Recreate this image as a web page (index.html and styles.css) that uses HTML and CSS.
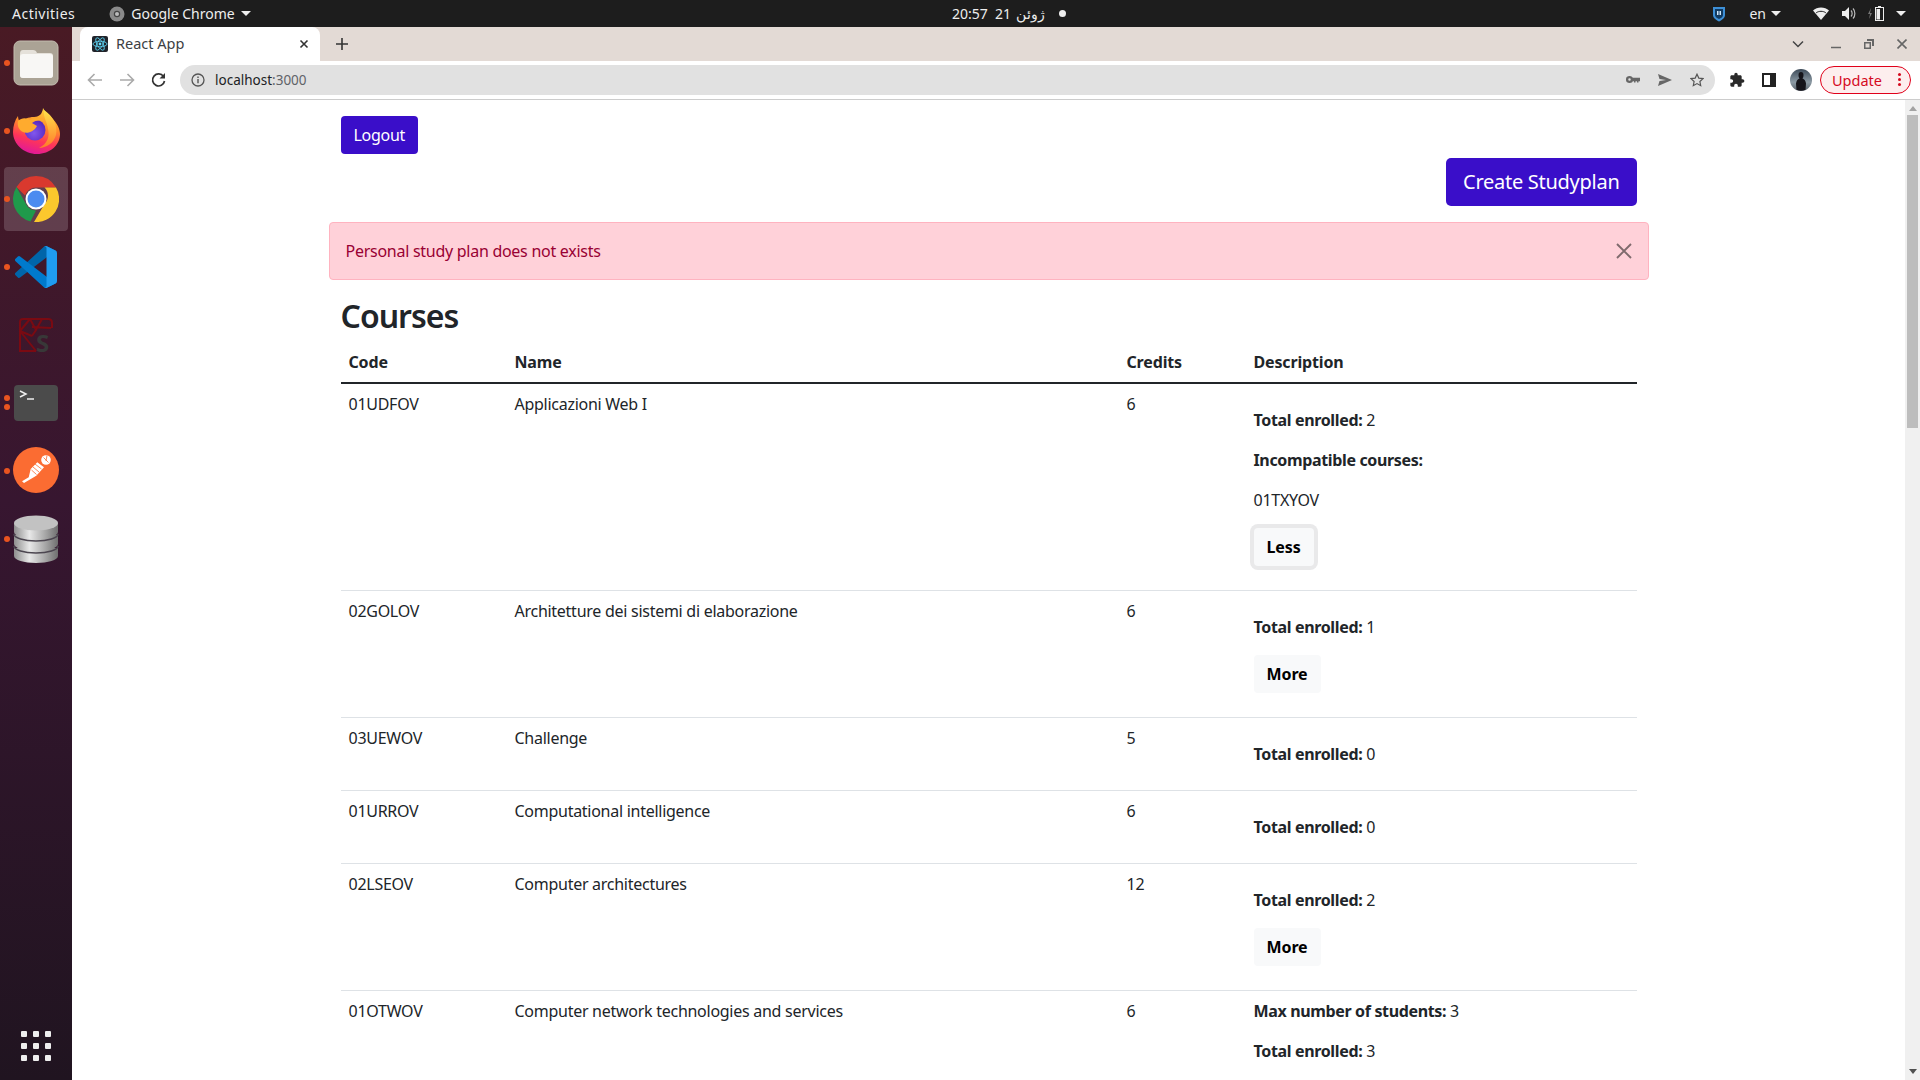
FILE: index.html

```html
<!DOCTYPE html>
<html lang="en">
<head>
    <meta charset="UTF-8">
    <title>React App</title>
    <link rel="stylesheet" href="styles.css">
</head>
<body>
    <header class="topbar">
        <div class="topbar-left">
            <span class="activities">Activities</span>
            <span class="app-menu">
                <svg class="app-icon" width="16" height="16" viewBox="0 0 16 16"><circle cx="8" cy="8" r="7.500" fill="#8a8a8a"/><circle cx="8" cy="8" r="3.200" fill="#444"/><circle cx="8" cy="8" r="2" fill="#bbb"/></svg>
                Google Chrome
                <i class="caret"></i>
            </span>
        </div>
        <div class="clock">20:57 &nbsp;21 <span dir="rtl">ژوئن</span> <i class="clock-dot"></i></div>
        <div class="tray">
            <svg class="tray-shield" width="14" height="16" viewBox="0 0 14 16"><path d="M1 1h12v8c0 3-3 5-6 6.500C4 14 1 12 1 9z" fill="#3d8fd6"/><path d="M3 3h8v6c0 2-2 3-4 4-2-1-4-2-4-4z" fill="#123a60"/><path d="M5 5h1.500v4H5zM7.500 5H9v4H7.500z" fill="#cfe6fa"/></svg>
            <span class="lang">en <i class="caret"></i></span>
            <svg width="16" height="13" viewBox="0 0 16 13"><path d="M0 3.500C4-.5 12-.5 16 3.500L8 13z" fill="#eee"/><path d="M3.200 5.800c2.600-2 7-2 9.600 0" stroke="#1d1d1d" stroke-width="1" fill="none"/></svg>
            <svg width="15" height="13" viewBox="0 0 15 13"><path d="M0 4h3l4-4v13l-4-4H0z" fill="#eee"/><path d="M9 3.500c1.500 1.500 1.500 4.500 0 6M11 1.500c2.500 2.500 2.500 7.500 0 10" stroke="#bbb" stroke-width="1.200" fill="none"/></svg>
            <svg class="battery" width="16" height="15" viewBox="0 0 16 15"><path d="M3 2 0 8h2l-1 5 3-6H2z" fill="#777"/><rect x="7.500" y="1.500" width="8" height="13" fill="none" stroke="#eee"/><rect x="10" y="0" width="3" height="2" fill="#eee"/><rect x="8.500" y="3" width="3.500" height="10.500" fill="#eee"/></svg>
            <i class="caret"></i>
        </div>
    </header>

    <div class="desktop">
        <nav class="dock">
            <div class="dock-item running">
                <svg width="46" height="46" viewBox="0 0 46 46">
                    <rect x="1" y="1" width="44" height="44" rx="6" fill="#aba395" stroke="#c4bdb0"/>
                    <path d="M7 14q0-4 3-4h10q3 0 4 3h13q3 0 3 3v19q0 3-3 3H10q-3 0-3-3z" fill="#e5e1da"/>
                    <path d="M7 17q0-3 3-3h27q3 0 3 3v18q0 3-3 3H10q-3 0-3-3z" fill="#f8f7f5"/>
                </svg>
            </div>
            <div class="dock-item running">
                <svg class="firefox" width="47" height="47" viewBox="0 0 47 47">
                    <defs>
                        <linearGradient id="ff1" x1="0.700" y1="0" x2="0.400" y2="1"><stop offset="0" stop-color="#ffd83c"/><stop offset="0.400" stop-color="#ff8a2a"/><stop offset="0.700" stop-color="#ff3558"/><stop offset="1" stop-color="#e0189a"/></linearGradient>
                        <linearGradient id="ff3" x1="0.500" y1="0" x2="0.500" y2="1"><stop offset="0" stop-color="#ffe24a"/><stop offset="1" stop-color="#ff7a2a"/></linearGradient>
                        <radialGradient id="ff2" cx="0.450" cy="0.650" r="0.600"><stop offset="0" stop-color="#8056ee"/><stop offset="1" stop-color="#5a2bc0"/></radialGradient>
                    </defs>
                    <path d="M30 1C32 5 35 7 39 11 44 16 47 22 47 27 47 38 37 47 24 47 11 47 0 37 0 25 0 19 2 13 5 9 5 12 6 14 8 16 11 12 15 10 21 10 24 10 26 9 28 7 29 5 30 3 30 1Z" fill="url(#ff1)"/>
                    <circle cx="22" cy="23" r="10.500" fill="url(#ff2)"/>
                    <path d="M31 3C40 9 45 18 43 28 41 36 33 41 26 41 34 37 37 30 35 22 34 15 30 10 31 3Z" fill="url(#ff3)"/>
                    <path d="M5 14C9 10 14 11 17 13 21 10 28 10 32 14 27 13 22 13 19 16L24 19C21 25 14 27 10 25 6 23 4 19 5 14Z" fill="#ffab2e"/>
                </svg>
            </div>
            <div class="dock-item running active">
                <svg width="46" height="46" viewBox="0 0 46 46">
                    <path d="M23 0a23 23 0 0 1 20 11.500H23a11.500 11.500 0 0 0-11 8L3.500 11A23 23 0 0 1 23 0z" fill="#d9392e"/>
                    <path d="M3.500 11 13 28a11.500 11.500 0 0 0 10 6.500L17.500 45.500A23 23 0 0 1 3.500 11z" fill="#1f9a4b"/>
                    <path d="M43 11.500A23 23 0 0 1 21 46l10.500-18a11.500 11.500 0 0 0 0-16.500z" fill="#fbc82d"/>
                    <circle cx="23" cy="23" r="10.500" fill="#fff"/>
                    <circle cx="23" cy="23" r="8.500" fill="#4c8bf0"/>
                </svg>
            </div>
            <div class="dock-item running">
                <svg width="42" height="42" viewBox="0 0 100 100">
                    <path d="M96.460 10.800 75.860.870a6.230 6.230 0 0 0-7.110 1.210L1.300 63.580a4.170 4.170 0 0 0 0 6.160l5.510 5.010a4.170 4.170 0 0 0 5.320.240L93.360 13.370c2.730-2.070 6.640-.130 6.640 3.300v-.240a6.250 6.250 0 0 0-3.540-5.630z" fill="#0065a9"/>
                    <path d="M96.460 89.200 75.860 99.130a6.230 6.230 0 0 1-7.110-1.210L1.300 36.420a4.170 4.170 0 0 1 0-6.160l5.510-5.010a4.170 4.170 0 0 1 5.320-.240L93.360 86.630c2.730 2.070 6.640.130 6.640-3.300v.240a6.250 6.250 0 0 1-3.540 5.630z" fill="#007acc"/>
                    <path d="M75.860 99.130a6.230 6.230 0 0 1-7.120-1.200c2.310 2.300 6.260.670 6.260-2.600V4.670c0-3.270-3.950-4.900-6.260-2.600a6.230 6.230 0 0 1 7.120-1.200l20.600 9.900A6.250 6.250 0 0 1 100 16.400v67.200c0 2.400-1.380 4.600-3.540 5.630z" fill="#1f9cf0"/>
                </svg>
            </div>
            <div class="dock-item">
                <svg class="kile" width="36" height="44" viewBox="0 0 36 44">
                    <path d="M18 34H2V5Q2 2 5 2H30Q34 2 34 6V11M2 14 12 2M2 14 18 34M2 14 14 19M12 2 18 13 24 2M14 10 33 11M18 13 14 19" fill="none" stroke="#7a0a12" stroke-width="2"/>
                    <text x="18" y="35" class="kile-letter">S</text>
                </svg>
            </div>
            <div class="dock-item running double">
                <svg width="44" height="36" viewBox="0 0 44 36">
                    <rect width="44" height="36" rx="4" fill="#4b4b4b"/>
                    <path d="M6 6l6 3-6 3" fill="none" stroke="#eee" stroke-width="1.500"/>
                    <path d="M13 14h7" stroke="#eee" stroke-width="1.500"/>
                </svg>
            </div>
            <div class="dock-item running">
                <svg class="postman" width="46" height="46" viewBox="0 0 46 46">
                    <circle cx="23" cy="23" r="23" fill="#fb6c32"/>
                    <path d="M24.300 15.300 31 20.300 23.300 28.700 11 36 9 34.300 15.700 30.300 17.700 22Z" fill="#fff"/>
                    <circle cx="33" cy="13" r="4.800" fill="#fff"/>
                    <path d="M22 17 28.500 22M20 20 26 25M18.500 23 23.500 27.500" stroke="#fb6c32" stroke-width="0.800"/>
                    <path d="M30.500 10.500 35.500 15.500M34 8.500 33 14" stroke="#fb6c32" stroke-width="0.800" fill="none"/>
                </svg>
            </div>
            <div class="dock-item running">
                <svg width="46" height="48" viewBox="0 0 46 48">
                    <defs>
                        <linearGradient id="db1" x1="0" x2="1" y1="0" y2="0"><stop offset="0" stop-color="#8e8e8e"/><stop offset="0.350" stop-color="#e8e8e8"/><stop offset="0.700" stop-color="#a9a9a9"/><stop offset="1" stop-color="#6f6f6f"/></linearGradient>
                    </defs>
                    <path d="M1 33v8c0 4 10 7 22 7s22-3 22-7v-8z" fill="url(#db1)"/>
                    <path d="M1 31c0 4 10 7 22 7s22-3 22-7" fill="none" stroke="#4c4650" stroke-width="1.500"/>
                    <path d="M1 20v9c0 4 10 7 22 7s22-3 22-7v-9z" fill="url(#db1)"/>
                    <path d="M1 19c0 4 10 7 22 7s22-3 22-7" fill="none" stroke="#4c4650" stroke-width="1.500"/>
                    <path d="M1 8v9c0 4 10 7 22 7s22-3 22-7V8z" fill="url(#db1)"/>
                    <ellipse cx="23" cy="8" rx="22" ry="7.500" fill="#c2c2c2"/>
                </svg>
            </div>
            <div class="dock-grid">
                <i></i><i></i><i></i><i></i><i></i><i></i><i></i><i></i><i></i>
            </div>
        </nav>

        <main class="browser">
            <div class="tabstrip">
                <div class="tab">
                    <svg class="favicon" width="16" height="16" viewBox="0 0 16 16">
                        <rect width="16" height="16" rx="2" fill="#20232a"/>
                        <g fill="none" stroke="#61dafb" stroke-width="0.800"><ellipse cx="8" cy="8" rx="7" ry="2.800"/><ellipse cx="8" cy="8" rx="7" ry="2.800" transform="rotate(60 8 8)"/><ellipse cx="8" cy="8" rx="7" ry="2.800" transform="rotate(120 8 8)"/></g>
                        <circle cx="8" cy="8" r="1.400" fill="#61dafb"/>
                    </svg>
                    <span class="tab-title">React App</span>
                    <svg width="10" height="10" viewBox="0 0 10 10"><path d="M1.500 1.500l7 7M8.500 1.500l-7 7" stroke="#333" stroke-width="1.600"/></svg>
                </div>
                <svg class="new-tab" width="12" height="12" viewBox="0 0 12 12"><path d="M6 0v12M0 6h12" stroke="#333" stroke-width="1.600"/></svg>
                <div class="window-controls">
                    <svg class="tab-search" width="12" height="8" viewBox="0 0 12 8"><path d="M1 1.500l5 5 5-5" stroke="#444" stroke-width="1.500" fill="none"/></svg>
                    <svg width="10" height="10" viewBox="0 0 10 10"><path d="M0 8.500h10" stroke="#666" stroke-width="1.500"/></svg>
                    <svg width="10" height="10" viewBox="0 0 10 10"><path d="M3 0h7v7H8V2H3z M0 3h7v7H0z M1.500 4.500v4h4v-4z" fill="#666" fill-rule="evenodd"/></svg>
                    <svg width="10" height="10" viewBox="0 0 10 10"><path d="M.500.500l9 9M9.500.500l-9 9" stroke="#666" stroke-width="1.600"/></svg>
                </div>
            </div>
            <div class="toolbar">
                <svg width="16" height="14" viewBox="0 0 16 14"><path d="M15 7H2M7.500 1 1.500 7l6 6" stroke="#aaa" stroke-width="1.600" fill="none"/></svg>
                <svg width="16" height="14" viewBox="0 0 16 14"><path d="M1 7h13M8.500 1l6 6-6 6" stroke="#aaa" stroke-width="1.600" fill="none"/></svg>
                <svg width="16" height="16" viewBox="0 0 16 16"><path d="M12.500 4.500A6 6 0 1 0 13.500 9" stroke="#333" stroke-width="1.700" fill="none"/><path d="M14 1v5.500H8.500z" fill="#333"/></svg>
                <div class="omnibox">
                    <svg width="14" height="14" viewBox="0 0 14 14"><circle cx="7" cy="7" r="6" stroke="#555" stroke-width="1.300" fill="none"/><path d="M7 6v4.200M7 3.500v1.400" stroke="#555" stroke-width="1.400"/></svg>
                    <span class="url">localhost<span class="url-port">:3000</span></span>
                    <span class="omni-actions">
                        <svg width="14" height="9" viewBox="0 0 14 9"><circle cx="3.500" cy="4.500" r="2.400" fill="none" stroke="#666" stroke-width="2.300"/><path d="M6 2.800h8v3.400h-1.500V7.500H11V6.200H9.500V7.500H8V6.200H6z" fill="#666"/></svg>
                        <svg width="14" height="12" viewBox="0 0 14 12"><path d="M0 0l14 6-14 6 1.500-5L8 6 1.500 5z" fill="#666"/></svg>
                        <svg width="14" height="14" viewBox="0 0 14 14"><path d="M7 1.200l1.800 3.900 4.200.5-3.100 2.900.8 4.200L7 10.600l-3.700 2.100.8-4.200L1 5.600l4.200-.5z" fill="none" stroke="#555" stroke-width="1.200"/></svg>
                    </span>
                </div>
                <div class="toolbar-actions">
                    <svg class="puzzle" width="16" height="16" viewBox="0 0 24 24"><path d="M20.500 11H19V7c0-1.100-.9-2-2-2h-4V3.500C13 2.120 11.880 1 10.500 1S8 2.120 8 3.500V5H4c-1.100 0-1.990.9-1.990 2v3.800H3.500c1.490 0 2.700 1.210 2.700 2.700s-1.210 2.700-2.700 2.700H2V20c0 1.100.9 2 2 2h3.800v-1.500c0-1.490 1.210-2.700 2.700-2.700 1.490 0 2.700 1.210 2.700 2.700V22H17c1.100 0 2-.9 2-2v-4h1.500c1.380 0 2.500-1.120 2.500-2.500S21.880 11 20.500 11z" fill="#2a2a2a"/></svg>
                    <svg width="14" height="14" viewBox="0 0 14 14"><path d="M0 0h14v14H0zM2 2v10h6V2z" fill="#222" fill-rule="evenodd"/></svg>
                    <svg width="22" height="22" viewBox="0 0 22 22">
                        <defs><linearGradient id="sky" x1="0" x2="0" y1="0" y2="1"><stop offset="0" stop-color="#3c4a58"/><stop offset="0.600" stop-color="#8c9aa4"/><stop offset="1" stop-color="#59616a"/></linearGradient></defs>
                        <circle cx="11" cy="11" r="11" fill="url(#sky)"/>
                        <path d="M11 3q2.500 0 2.500 3t-1 3.500q3 1 3.500 5l-.5 6.300q-2.500 1-4.500 1t-4.500-1L6 14.500q.5-4 3.500-5-1-.5-1-3.500T11 3z" fill="#15141a"/>
                    </svg>
                    <div class="update-btn">
                        <span>Update</span>
                        <i class="update-dots"></i>
                    </div>
                </div>
            </div>

            <div class="viewport">
                <div class="page">
                    <div class="container">
                        <div class="logout-row"><button class="btn btn-primary">Logout</button></div>
                        <div class="create-row"><button class="btn btn-primary btn-lg">Create Studyplan</button></div>
                        <div class="alert">
                            <span>Personal study plan does not exists</span>
                            <svg width="16" height="16" viewBox="0 0 16 16"><path d="M1 1l14 14M15 1 1 15" stroke="#7f6a6d" stroke-width="1.900"/></svg>
                        </div>
                        <h2 class="title">Courses</h2>
                        <table class="courses">
                            <thead>
                                <tr>
                                    <th class="col-code">Code</th>
                                    <th class="col-name">Name</th>
                                    <th class="col-credits">Credits</th>
                                    <th>Description</th>
                                </tr>
                            </thead>
                            <tbody>
                                <tr>
                                    <td>01UDFOV</td>
                                    <td>Applicazioni Web I</td>
                                    <td>6</td>
                                    <td>
                                        <p class="empty"></p>
                                        <p><b>Total enrolled:</b> 2</p>
                                        <p><b>Incompatible courses:</b></p>
                                        <p>01TXYOV</p>
                                        <button class="btn btn-light focused">Less</button>
                                    </td>
                                </tr>
                                <tr>
                                    <td>02GOLOV</td>
                                    <td>Architetture dei sistemi di elaborazione</td>
                                    <td>6</td>
                                    <td>
                                        <p class="empty"></p>
                                        <p><b>Total enrolled:</b> 1</p>
                                        <button class="btn btn-light">More</button>
                                    </td>
                                </tr>
                                <tr>
                                    <td>03UEWOV</td>
                                    <td>Challenge</td>
                                    <td>5</td>
                                    <td>
                                        <p class="empty"></p>
                                        <p><b>Total enrolled:</b> 0</p>
                                    </td>
                                </tr>
                                <tr>
                                    <td>01URROV</td>
                                    <td>Computational intelligence</td>
                                    <td>6</td>
                                    <td>
                                        <p class="empty"></p>
                                        <p><b>Total enrolled:</b> 0</p>
                                    </td>
                                </tr>
                                <tr>
                                    <td>02LSEOV</td>
                                    <td>Computer architectures</td>
                                    <td>12</td>
                                    <td>
                                        <p class="empty"></p>
                                        <p><b>Total enrolled:</b> 2</p>
                                        <button class="btn btn-light">More</button>
                                    </td>
                                </tr>
                                <tr>
                                    <td>01OTWOV</td>
                                    <td>Computer network technologies and services</td>
                                    <td>6</td>
                                    <td>
                                        <p><b>Max number of students:</b> 3</p>
                                        <p><b>Total enrolled:</b> 3</p>
                                    </td>
                                </tr>
                            </tbody>
                        </table>
                    </div>
                </div>
                <div class="scrollbar">
                    <i class="arrow-up"></i>
                    <div class="thumb"></div>
                    <div class="track"></div>
                    <i class="arrow-down"></i>
                </div>
            </div>
        </main>
    </div>
</body>
</html>
```

FILE: styles.css

```css
* {
    box-sizing: border-box;
}
html, body {
    height: 100%;
}
body {
    margin: 0;
    display: flex;
    flex-direction: column;
    overflow: hidden;
    font-family: "Noto Sans", "Open Sans", sans-serif;
    font-size: 16px;
    line-height: 24px;
    color: #212529;
    background: #fff;
}

/* gnome top bar */
.topbar {
    height: 27px;
    flex: none;
    display: grid;
    grid-template-columns: 1fr auto 1fr;
    align-items: center;
    background: #1d1d1d;
    color: #eee;
    font-size: 14px;
    line-height: 27px;
}
.topbar-left {
    display: flex;
    align-items: center;
    padding-left: 12px;
}
.activities {
    margin-right: 34px;
    letter-spacing: 0.5px;
}
.app-menu {
    display: flex;
    align-items: center;
    gap: 6px;
}
.caret {
    display: inline-block;
    width: 0;
    height: 0;
    border-left: 5px solid transparent;
    border-right: 5px solid transparent;
    border-top: 5px solid #eee;
}
.clock {
    margin-left: 98px;
    display: flex;
    align-items: center;
    gap: 5px;
}
.clock-dot {
    width: 7px;
    height: 7px;
    margin-left: 9px;
    border-radius: 50%;
    background: #eee;
}
.tray {
    display: flex;
    align-items: center;
    justify-content: flex-end;
    padding-right: 14px;
}
.tray-shield {
    margin-right: 23px;
}
.lang {
    display: flex;
    align-items: center;
    gap: 5px;
    margin-right: 32px;
}
.tray svg + svg {
    margin-left: 13px;
}
.tray svg.battery {
    margin-left: 11px;
}
.tray > .caret {
    margin-left: 12px;
}

.desktop {
    flex: 1;
    display: flex;
    min-height: 0;
}

/* ubuntu dock */
.dock {
    width: 72px;
    flex: none;
    display: flex;
    flex-direction: column;
    align-items: center;
    padding-top: 2px;
    background: linear-gradient(#491a24, #371630 45%, #201420);
}
.dock-item {
    width: 64px;
    height: 68px;
    display: flex;
    align-items: center;
    justify-content: center;
    position: relative;
    border-radius: 4px;
}
.dock-item.active {
    height: 64px;
    margin: 2px 0;
    background: rgba(255, 255, 255, 0.17);
}
.dock-item.running::before {
    content: "";
    position: absolute;
    left: 0;
    top: 50%;
    width: 6px;
    height: 6px;
    margin-top: -3px;
    border-radius: 50%;
    background: #e95420;
}
.dock-item.double::after {
    content: "";
    position: absolute;
    left: 0;
    top: 50%;
    width: 6px;
    height: 6px;
    margin-top: 1px;
    border-radius: 50%;
    background: #e95420;
}
.dock-item.double::before {
    margin-top: -8px;
}
.firefox, .postman {
    margin-top: -2px;
}
.kile {
    margin-top: 8px;
}
.kile-letter {
    font-size: 24px;
    font-weight: 700;
    fill: #383838;
}
.dock-grid {
    margin-top: auto;
    margin-bottom: 19px;
    display: grid;
    grid-template-columns: repeat(3, 6px);
    gap: 6px;
}
.dock-grid i {
    width: 6px;
    height: 6px;
    border-radius: 1px;
    background: #eee;
}

.browser {
    flex: 1;
    min-width: 0;
    display: flex;
    flex-direction: column;
}

/* tabs */
.tabstrip {
    height: 34px;
    flex: none;
    display: flex;
    align-items: center;
    background: #e3dad5;
}
.tab {
    width: 240px;
    height: 34px;
    margin-left: 8px;
    padding: 0 11px 0 12px;
    display: flex;
    align-items: center;
    background: #fff;
    border-radius: 8px 8px 0 0;
}
.tab-title {
    flex: 1;
    margin: 0 0 2px 8px;
    font-size: 14.500px;
    color: #3c4043;
}
.new-tab {
    margin-left: 16px;
}
.window-controls {
    margin-left: auto;
    padding-right: 13px;
    display: flex;
    align-items: center;
    gap: 23px;
}
.tab-search {
    margin-right: 4px;
}

/* toolbar */
.toolbar {
    height: 39px;
    flex: none;
    display: flex;
    align-items: center;
    padding: 0 9px 1px 15px;
    border-bottom: 1px solid #ccc;
    background: #fff;
    gap: 16px;
}
.omnibox {
    flex: 1;
    height: 30px;
    margin-left: -3px;
    display: flex;
    align-items: center;
    padding: 0 11px;
    gap: 10px;
    border-radius: 15px;
    background: #e1e1e1;
}
.url {
    flex: 1;
    font-size: 13.500px;
    color: #202124;
}
.url-port {
    color: #5f6368;
}
.omni-actions {
    display: flex;
    align-items: center;
    gap: 18px;
}
.toolbar-actions {
    margin-left: -2px;
    display: flex;
    align-items: center;
    gap: 14px;
}
.puzzle {
    margin-right: 3px;
}
.update-btn {
    width: 91px;
    height: 28px;
    margin-left: -6px;
    padding: 0 9px 0 11px;
    display: flex;
    align-items: center;
    justify-content: space-between;
    border: 1px solid #e0001a;
    border-radius: 14px;
    background: #fdeeee;
    color: #d50a1e;
    font-size: 14.500px;
}
.update-dots {
    width: 3px;
    height: 3px;
    border-radius: 50%;
    background: #d50a1e;
    box-shadow: 0 -5px 0 #d50a1e, 0 5px 0 #d50a1e;
}

/* page */
.viewport {
    flex: 1;
    min-height: 0;
    display: flex;
}
.page {
    flex: 1;
    min-width: 0;
    overflow: hidden;
    letter-spacing: -0.27px;
}
.container {
    width: 1320px;
    margin: 0 auto;
    padding-top: 16px;
}
.logout-row {
    padding: 0 12px;
}
.create-row {
    display: flex;
    justify-content: flex-end;
    padding: 4px 12px 16px;
}
.btn {
    height: 38px;
    padding: 0 12px;
    border: 1px solid transparent;
    border-radius: 4px;
    font-family: inherit;
    font-size: 16px;
    line-height: 24px;
    letter-spacing: inherit;
}
.btn-primary {
    background: #3a0ec9;
    color: #fff;
}
.btn-lg {
    height: 48px;
    padding: 0 16px;
    font-size: 20px;
    border-radius: 5px;
}
.btn-light {
    display: block;
    margin-bottom: 16px;
    background: #f8f9fa;
    color: #000;
    font-weight: 700;
    letter-spacing: -0.1px;
}
.btn-light.focused {
    box-shadow: 0 0 0 4px #e9e9ea;
}
.alert {
    height: 58px;
    display: flex;
    align-items: center;
    justify-content: space-between;
    padding: 0 16px;
    margin-bottom: 16px;
    border: 1px solid #ffb3c0;
    border-radius: 4px;
    background: #ffd1d9;
    color: #990033;
}
.title {
    margin: 0 12px 7px;
    padding-top: 1px;
    font-size: 32px;
    line-height: 38.400px;
    font-weight: 600;
    letter-spacing: -1px;
}
.courses {
    width: 1296px;
    margin: 0 12px;
    table-layout: fixed;
    border-collapse: collapse;
}
.col-code {
    width: 166px;
}
.col-name {
    width: 612px;
}
.col-credits {
    width: 127px;
}
.courses th, .courses td {
    padding: 8px;
    text-align: left;
    vertical-align: top;
}
.courses th {
    letter-spacing: -0.15px;
}
.courses b {
    letter-spacing: -0.35px;
}
.courses thead tr {
    border-bottom: 2px solid #212529;
}
.courses tbody tr {
    border-bottom: 1px solid #dee2e6;
}
.courses p {
    margin: 0 0 16px;
}
.courses p.empty {
    height: 0;
}
.scrollbar {
    width: 15px;
    flex: none;
    display: flex;
    flex-direction: column;
    align-items: center;
    background: #f0f0f0;
    padding: 6px 0;
}
.arrow-up, .arrow-down {
    width: 0;
    height: 0;
    border-left: 4px solid transparent;
    border-right: 4px solid transparent;
}
.arrow-up {
    border-bottom: 5px solid #a3a3a3;
}
.arrow-down {
    border-top: 5px solid #505050;
}
.thumb {
    width: 11px;
    height: 313px;
    margin-top: 4px;
    background: #bdbdbd;
}
.track {
    flex: 1;
}
```
